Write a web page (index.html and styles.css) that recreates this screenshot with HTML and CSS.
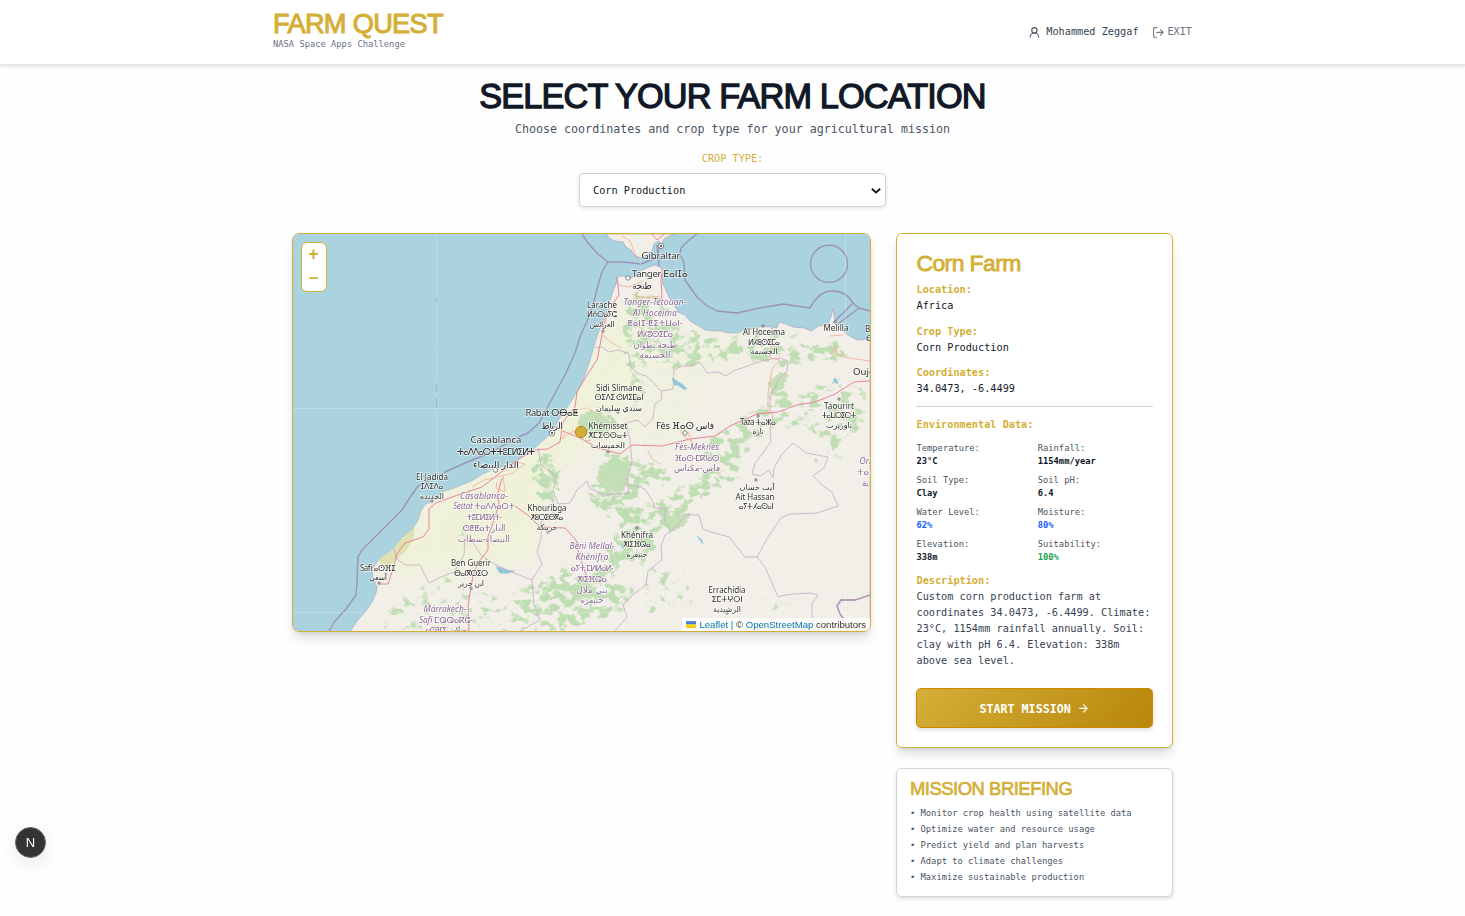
FILE: index.html
```html
<!DOCTYPE html>
<html lang="en">
<head>
<meta charset="utf-8">
<title>Farm Quest</title>
<link rel="stylesheet" href="styles.css">
</head>
<body>
<header class="header">
  <div class="header-inner">
    <div class="brand">
      <div class="display brand-name">FARM QUEST</div>
      <div class="brand-sub">NASA Space Apps Challenge</div>
    </div>
    <div class="account">
      <svg class="icon user-icon" viewBox="0 0 24 24"><circle cx="12" cy="8" r="5"/><path d="M20 21a8 8 0 0 0-16 0"/></svg>
      <span class="user-name">Mohammed Zeggaf</span>
      <a class="exit"><svg class="icon" viewBox="0 0 24 24"><path d="M9 21H5a2 2 0 0 1-2-2V5a2 2 0 0 1 2-2h4M16 17l5-5-5-5M21 12H9"/></svg>EXIT</a>
    </div>
  </div>
</header>

<main class="main">
  <h1 class="display title">SELECT YOUR FARM LOCATION</h1>
  <p class="subtitle">Choose coordinates and crop type for your agricultural mission</p>
  <label class="crop-label" for="crop">CROP TYPE:</label>
  <div class="select-wrap">
    <select id="crop" class="select"><option>Corn Production</option></select>
    <svg class="chevron" viewBox="0 0 10 6"><path d="M0.8 0.8 5 4.5 9.2 0.8"/></svg>
  </div>

  <div class="columns">
    <section class="map">
      <svg class="map-svg" viewBox="293 234 577 397" preserveAspectRatio="none">
        <defs>
          <filter id="forest" filterUnits="userSpaceOnUse" x="293" y="234" width="577" height="397" color-interpolation-filters="sRGB">
            <feGaussianBlur in="SourceGraphic" stdDeviation="5" result="area"/>
            <feTurbulence type="fractalNoise" baseFrequency="0.1 0.13" numOctaves="5" seed="7"/>
            <feColorMatrix values="0 0 0 0 0.75  0 0 0 0 0.87  0 0 0 0 0.70  1 0 0 0 0" result="noise"/>
            <feComposite in="noise" in2="area" operator="in"/>
            <feComponentTransfer><feFuncA type="linear" slope="9" intercept="-3.9"/></feComponentTransfer>
          </filter>
          <filter id="soft" x="-20%" y="-20%" width="140%" height="140%"><feGaussianBlur stdDeviation="12"/></filter>
          <path id="africa" d="M350 632 357 621 365 612 372 602 376 593 377 587 373 578 372 570 376 563 383 556 392 550 405 535 412 530 418 521 421 511 425 505 435 499 443 492 452 489 472 481 483 474 495 469 506 466 518 460 527 454 535 448 544 440 552 433 560 418 568 407 576 394 581 385 585 376 590 361 594 347 599 331 605 317 609 304 613 291 616 284 618 276 624 276 628 279 637 275 642 270 649 267 655 265 660 267 664 271 662 276 663 284 666 290 669 297 674 304 678 312 685 315 690 321 697 325 705 330 713 331 721 331 728 333 738 333 743 330 752 329 763 326 777 328 779 322 786 324 793 327 804 328 811 331 819 326 828 324 831 317 833 308 834 316 836 325 842 330 848 335 857 340 870 339 870 632Z"/>
          <clipPath id="land"><use href="#africa"/></clipPath>
        </defs>

        <rect class="sea" x="293" y="234" width="577" height="397"/>
        <path class="coast" d="M607 234 609 238 615 241 623 242 626 247 631 250 634 255 641 258 647 254 652 251 654 244 659 241 661 246 664 239 669 236 675 234Z"/>
        <use class="coast" href="#africa"/>

        <g clip-path="url(#land)">
          <g class="farmland" filter="url(#soft)">
            <path d="M372 570 430 500 540 440 600 330 640 300 640 350 600 440 560 470 530 560 470 570 400 580Z"/>
            <path d="M600 390 660 350 720 330 760 340 700 390 690 450 590 450Z" opacity=".6"/>
          </g>
          <path class="woods" d="M581 416 590 411 601 413 606 419 613 423 608 430 594 433 584 430 578 424ZM600 467 613 459 626 463 628 480 622 492 607 490 597 480ZM664 521 676 514 690 514 684 525 670 532ZM768 384 780 373 788 374 783 386 775 393ZM570 590 584 584 596 588 588 597 574 600Z"/>
          <g filter="url(#forest)">
            <path d="M530 450h28l8 40-18 25-20-30zM578 414l36-10 10 24-20 12-24-6zM600 445l60 15 20 20-40 15-40 5zM590 480l40-15 10 40-20 20-40-20z"/>
            <path d="M630 510l60-30 50-20 10 14-60 34-40 50-40 20-30 30-50 10-10-30 70-20zM570 580h70l-10 30-50 20zM540 595l35-10 10 46h-40z"/>
            <path d="M645 285l20 10 20 30 60 14 50 10 40-15 20 20-70 15-60-6-50 10-45-20-10-40zM700 440l60-40 20-30 15 10-20 50-50 50-25 5z" opacity=".93"/>
            <path d="M780 400l60-30 30 20v50l-40 10-50-20zM620 290h20l10 110-20 20-10-60z" opacity=".85"/>
            <path d="M380 600l70-30 60 20 60-40 30 40-40 50H380zM640 560l50 10 10 40-60 10zM800 460l40-20 20 20-40 12zM740 320l60 10 60 30-50 10-80-10z" opacity=".76"/>
            <path d="M440 510l40 5 20 30-50 10zM760 590l60 10-10 20-70 0z" opacity=".72"/>
          </g>
          <path class="scrub" d="M377 560 391 549 405 536 415 524 413 540 405 552 393 562 386 568Z"/>
        </g>

        <g class="lake">
          <path d="M672 378l5 3 5 3 5 5-4 0-5-4-4 0zM496 567l5 1 5 2 8 1-5 2-9 0zM834 378l3 2 1 4-4-2zM697 536l5 4 1 4-3-4zM621 545l3 1-1 3z"/>
        </g>

        <g class="province">
          <path d="M595 348 602 347 609 352 619 350 629 354 630 366 637 373 646 376 655 384 661 391 673 389 674 370 682 366 692 366 700 362 707 373 718 372 726 376 735 370 745 367 758 362 771 359 780 358 788 361 787 371 779 378 775 388 770 394 770 410 773 416 770 428 771 441 763 453 755 463 752 474 761 476 769 470 773 478 774 468 782 454 793 443 806 453 828 457 824 468 813 476 822 485 832 492 838 506 817 513 790 514 781 518 768 537 757 557 745 557 729 537 711 532 703 529 699 515 686 515 673 530 665 535 661 546 662 560 648 571 646 585 634 594 623 605 627 617 615 631"/>
          <path d="M661 391 662 399 655 404 653 418 645 427 638 420 626 423 630 440 632 462 627 478 629 493 605 495 590 489 587 481 577 490 570 503 558 504 553 491 556 476 549 471 541 465 538 448"/>
          <path d="M553 499 553 515 541 521 541 538 537 552 542 564 532 580 514 573 496 565 481 555 470 538M465 538 464 555 454 572 441 577 429 583 420 565 405 565 396 558 394 548"/>
          <path d="M532 580 534 604 540 620 520 631M757 557 765 567 772 583 778 597 785 595 793 594 810 593 818 595 812 603 812 615 816 631M629 484 645 489 652 500 655 508 666 508 664 520 671 530"/>
        </g>
        <path class="border" d="M870 595 855 600 841 600 837 606 840 614 843 618 848 631"/>

        <g class="road-red">
          <path d="M617 277 619 295 609 309 604 325 600 345 597 360 587 375 577 392 575 407 563 422 560 442 548 449 535 450 520 458 500 473 482 487 455 496 436 503 429 509 429 529 423 537 405 543 397 554 392 572 388 584 379 584"/>
          <path d="M563 431 580 438 598 448 620 454 632 445 662 446 690 439 715 436 730 426 757 414 778 412 797 405 815 402 835 394 854 382 870 381M502 478 498 493 499 505 488 537 488 550 478 563 473 575 468 606 469 631M515 506 529 516 540 527 565 528 576 540 580 558 588 580M662 269 661 281 662 295 661 301M652 234 657 240 662 236 664 234"/>
        </g>
        <g class="road-orange">
          <path d="M472 487 484 480 497 477 513 473 525 464 518 462 506 468M497 482 496 488 505 492 503 475M618 285 629 287 642 281 636 296 650 298 660 296M602 335 612 343 621 348M768 414 768 394 772 369 780 360 770 358 772 342M836 346 837 355 849 358 870 361M836 346 832 354M830 336 843 335M648 451 652 459 660 464M565 433 562 439 573 431 585 441 591 440M622 236 630 241 638 261M680 430 684 436 692 442 688 432M580 409 588 408 594 412"/>
        </g>

        <g class="maritime">
          <path d="M582 234 588 243 597 253 608 262 624 262 641 264 658 257 657 245M608 262 602 272 598 285 593 305 587 321 580 337 575 353 565 375 553 397 545 412 539 423 528 433 514 439 492 452 465 463 445 472 418 486 411 496 402 510 384 528 362 550 358 557 357 582 356 595 346 609 335 621 329 631M658 246 659 267"/>
          <path d="M697 234 688 241 681 248 680 254 684 263 685 280 697 297 706 305 717 311 737 313 760 308 783 304 810 308Q819 291 832 291 846 291 853 303L859 308 870 311M853 303 835 321M859 308 838 324"/>
          <circle cx="829" cy="263.8" r="18.5"/>
        </g>

        <g class="seam"><path d="M436.5 234V631M293 408.5H870M293 612.5H870M640.5 234V631M845.5 234V631"/></g>
        <path class="seam-dark" d="M436.5 297v5M436.5 348v1M436.5 383v8M436.5 398v10"/>

        <g class="town">
          <circle cx="661" cy="246" r="2.6"/><circle cx="628" cy="278" r="2.2"/><circle cx="552" cy="433" r="2.8"/><circle cx="495.5" cy="470" r="2.2"/><circle cx="685" cy="433" r="2.2"/>
          <path d="M602 330h2v2h-2zM762 325h2v2h-2zM834 321h2v2h-2zM617 411h2v2h-2zM838 398h2v2h-2zM757 415h2v2h-2zM607 451h2v2h-2zM755 479h2v2h-2zM636 527h2v2h-2zM431 500h2v2h-2zM547 531h2v2h-2zM378 582h2v2h-2zM470 587h2v2h-2zM726 612h2v2h-2z"/>
        </g>
        <g class="capital"><circle cx="661" cy="246" r="1"/><circle cx="552" cy="433" r="1"/></g>

        <g class="label city">
          <text x="661" y="258.500" textLength="39">Gibraltar</text>
          <text x="660" y="276.500" textLength="56">Tanger ⴹⴰⵏⵊⴰ</text><text x="642" y="289" textLength="20">طنجة</text>
          <text x="552" y="415.500" textLength="53">Rabat ⵔⴱⴰⵟ</text><text x="552" y="428.500" textLength="22">الرباط</text>
          <text x="496" y="442.500" textLength="51">Casablanca</text><text x="496" y="454.500" textLength="78">ⵜⴰⴷⴷⴰⵔⵜ ⵜⵓⵎⵍⵉⵍⵜ</text><text x="496" y="467.500" textLength="46">الدار البيضاء</text>
          <text x="685" y="429" textLength="58">Fès ⴼⴰⵙ فاس</text>
          <text x="853" y="374.500" class="edge">Oujda</text>
        </g>
        <g class="label">
          <text x="602" y="308" textLength="30">Larache</text><text x="602" y="317" textLength="30">ⵍⵄⵔⴰⵢⵛ</text><text x="602" y="327" textLength="25">العرائش</text>
          <text x="764" y="334.500" textLength="42">Al Hoceima</text><text x="764" y="344.500" textLength="32">ⵍⵃⵓⵙⵉⵎⴰ</text><text x="764" y="354" textLength="27">الحسيمة</text>
          <text x="836" y="330.500" textLength="25">Melilla</text>
          <text x="619" y="390.500" textLength="46">Sidi Slimane</text><text x="619" y="400" textLength="49">ⵙⵉⴷⵉ ⵙⵍⵉⵎⴰⵏ</text><text x="619" y="410.500" textLength="46">سيدي سليمان</text>
          <text x="608" y="428.500" textLength="39">Khémisset</text><text x="608" y="437.500" textLength="40">ⵅⵎⵉⵙⵙⴰⵜ</text><text x="608" y="447.500" textLength="34">الخميسات</text>
          <text x="758" y="424.500" textLength="36">Taza ⵜⴰⵣⴰ</text><text x="758" y="434" textLength="11">تازة</text>
          <text x="839" y="408.500" textLength="30">Taourirt</text><text x="839" y="418" textLength="35">ⵜⴰⵡⵔⵉⵔⵜ</text><text x="839" y="428" textLength="26">تاوريرت</text>
          <text x="757" y="490" textLength="35">آيت حسان</text><text x="755" y="499.500" textLength="39">Ait Hassan</text><text x="756" y="509" textLength="35">ⴰⵢⵜ ⵃⴰⵙⴰⵏ</text>
          <text x="432" y="479.500" textLength="32">El Jadida</text><text x="432" y="489" textLength="23">ⵊⴷⵉⴷⴰ</text><text x="432" y="498.500" textLength="24">الجديدة</text>
          <text x="547" y="510.500" textLength="39">Khouribga</text><text x="547" y="520" textLength="33">ⵅⵓⵔⵉⴱⴳⴰ</text><text x="547" y="530" textLength="21">خريبكة</text>
          <text x="637" y="537.500" textLength="32">Khénifra</text><text x="637" y="547" textLength="28">ⵅⵏⵉⴼⵕⴰ</text><text x="637" y="557" textLength="21">خنيفرة</text>
          <text x="471" y="566" textLength="40">Ben Guerir</text><text x="471" y="575.500" textLength="34">ⴱⴰⵏⴳⵔⵉⵔ</text><text x="471" y="585.500" textLength="26">ابن جرير</text>
          <text x="378" y="570.500" textLength="36">Safi ⴰⵙⴼⵉ</text><text x="378" y="580" textLength="18">آسفي</text>
          <text x="727" y="592.500" textLength="37">Errachidia</text><text x="727" y="602" textLength="31">ⵉⵎⵜⵖⵔⵏ</text><text x="727" y="612" textLength="28">الرشيدية</text>
          <text x="865" y="331.500" class="edge">Be</text><text x="866" y="341" class="edge">ⴱ</text>
        </g>
        <g class="label region">
          <text x="655" y="304.500" textLength="63">Tanger-Tétouan-</text><text x="655" y="315.500" textLength="44">Al Hoceima</text><text class="plain" x="655" y="326" textLength="55">ⵟⴰⵏⵊ-ⵟⵉⵜⵡⴰⵏ-</text><text class="plain" x="655" y="337" textLength="36">ⵍⵃⵓⵙⵉⵎⴰ</text><text class="plain" x="655" y="348" textLength="43">طنجة تطوان</text><text class="plain" x="655" y="358" textLength="31">الحسيمة</text>
          <text x="697" y="449.500" textLength="44">Fès-Meknès</text><text class="plain" x="697" y="460.500" textLength="45">ⴼⴰⵙ-ⵎⴽⵏⴰⵙ</text><text class="plain" x="697" y="471" textLength="46">فاس-مكناس</text>
          <text x="484" y="499" textLength="48">Casablanca-</text><text x="484" y="509" textLength="62">Settat <tspan class="plain">ⵜⴰⴷⴷⴰⵔⵜ</tspan></text><text class="plain" x="484" y="520" textLength="36">ⵜⵓⵎⵍⵉⵍⵜ-</text><text class="plain" x="484" y="531" textLength="43">ⵙⵟⵟⴰⵜ الدار</text><text class="plain" x="484" y="542" textLength="52">البيضاء-سطات</text>
          <text x="592" y="549" textLength="45">Béni Mellal-</text><text x="592" y="560" textLength="33">Khénifra</text><text class="plain" x="592" y="571" textLength="43">ⴰⵢⵜ ⵎⵍⵍⴰⵍ-</text><text class="plain" x="592" y="582" textLength="30">ⵅⵏⵉⴼⵕⴰ</text><text class="plain" x="592" y="593" textLength="31">بني ملال</text><text class="plain" x="592" y="603" textLength="23">خنيفرة</text>
          <text x="445" y="612" textLength="43">Marrakech-</text><text x="446" y="623" textLength="54">Safi <tspan class="plain">ⵎⵕⵕⴰⴽⵛ-</tspan></text><text class="plain" x="446" y="633" textLength="41">ⴰⵙⴼⵉ مراكش</text>
          <text class="edge" x="859.500" y="464">Ori</text><text class="plain edge" x="857" y="475">ⵜⴰⵏⴳ</text><text class="plain edge" x="862" y="486">ية</text>
        </g>
        <circle class="marker" cx="581" cy="432" r="5.6"/>
      </svg>
      <div class="zoom"><button>+</button><button>−</button></div>
      <div class="attribution"><svg class="flag" viewBox="0 0 12 8"><path fill="#4c7be1" d="M0 0h12v4H0z"/><path fill="#ffd500" d="M0 4h12v3H0z"/><path fill="#e0bc00" d="M0 7h12v1H0z"/></svg><span><a>Leaflet</a> <i>|</i> © <a>OpenStreetMap</a> contributors</span></div>
    </section>

    <aside class="side">
      <section class="card farm">
        <h2 class="display farm-title">Corn Farm</h2>
        <div class="field"><b>Location:</b><span>Africa</span></div>
        <div class="field"><b>Crop Type:</b><span>Corn Production</span></div>
        <div class="field coords"><b>Coordinates:</b><span>34.0473, -6.4499</span></div>
        <div class="env">
          <b class="gold">Environmental Data:</b>
          <div class="stats">
            <div>Temperature:<b>23°C</b></div><div>Rainfall:<b>1154mm/year</b></div>
            <div>Soil Type:<b>Clay</b></div><div>Soil pH:<b>6.4</b></div>
            <div>Water Level:<b class="blue">62%</b></div><div>Moisture:<b class="blue">80%</b></div>
            <div>Elevation:<b>338m</b></div><div>Suitability:<b class="green">100%</b></div>
          </div>
        </div>
        <b class="gold">Description:</b>
        <p class="description">Custom corn production farm at coordinates 34.0473, -6.4499. Climate: 23°C, 1154mm rainfall annually. Soil: clay with pH 6.4. Elevation: 338m above sea level.</p>
        <button class="start"><span class="start-text">START MISSION</span><svg class="arrow" viewBox="0 0 24 24"><path d="M5 12h14M12 5l7 7-7 7"/></svg></button>
      </section>
      <section class="card briefing">
        <h3 class="display briefing-title">MISSION BRIEFING</h3>
        <ul class="list">
          <li>• Monitor crop health using satellite data</li>
          <li>• Optimize water and resource usage</li>
          <li>• Predict yield and plan harvests</li>
          <li>• Adapt to climate challenges</li>
          <li>• Maximize sustainable production</li>
        </ul>
      </section>
    </aside>
  </div>
</main>
<div class="dev-badge">N</div>
</body>
</html>
```

FILE: styles.css
```css
* { box-sizing: border-box; }
body {
  margin: 0;
  height: 916px;
  overflow: hidden;
  background: #fefefe;
  color: #111827;
  font: 10.23px/16px "DejaVu Sans Mono", monospace;
}
h1, h2, h3, p, ul { margin: 0; padding: 0; font-weight: 400; }
button { font: inherit; }
.display {
  font-family: "Liberation Sans", Arial, sans-serif;
  letter-spacing: -0.025em;
  -webkit-text-stroke: 0.038em currentColor;
  white-space: nowrap;
}
.gold, .field b { color: #d4af37; display: block; }

.header {
  height: 65px;
  background: #fff;
  border-bottom: 1px solid #e5e7eb;
  box-shadow: 0 1px 3px rgba(0, 0, 0, .16);
}
.header-inner {
  width: 921px;
  height: 64px;
  margin: 0 auto;
  display: flex;
  justify-content: space-between;
  align-items: center;
}
.brand { padding-bottom: 4px; padding-left: 1px; }
.brand-name { font-size: 27.2px; line-height: 29px; color: #d4af37; }
.brand-sub { font-size: 8.77px; line-height: 13px; color: #6b7280; }
.account { display: flex; align-items: center; color: #374151; padding-right: 1px; }
.icon { width: 12.8px; height: 12.8px; fill: none; stroke: #6b7280; stroke-width: 2; stroke-linecap: round; stroke-linejoin: round; }
.user-icon { stroke: #4b5563; margin-right: 6px; }
.exit { display: flex; align-items: center; gap: 3px; margin-left: 13px; color: #6b7280; }

.main { width: 881px; margin: 0 auto; padding-top: 11px; }
.title { font-size: 34.3px; line-height: 40px; text-align: center; color: #111827; }
.subtitle { margin-top: 3px; font-size: 11.66px; line-height: 20px; text-align: center; color: #4b5563; }
.crop-label { display: block; margin-top: 12px; line-height: 16px; text-align: center; color: #d4af37; }
.select-wrap { position: relative; width: 307px; height: 34px; margin: 6px auto 0; }
.select {
  appearance: none;
  width: 100%;
  height: 100%;
  padding: 1px 13px 0;
  font: inherit;
  color: #111827;
  background: #fff;
  border: 1px solid #d1d5db;
  border-radius: 5px;
  box-shadow: 0 1px 4px rgba(0, 0, 0, .12);
}
.chevron { position: absolute; right: 5.5px; top: 14.5px; width: 10px; height: 6px; fill: none; stroke: #111827; stroke-width: 1.8; }

.columns { display: grid; grid-template-columns: 579px 277px; gap: 25px; margin-top: 26px; align-items: start; }
.map {
  position: relative;
  height: 399px;
  border: 1px solid #d4af37;
  border-radius: 7px;
  overflow: hidden;
  box-shadow: 0 8px 12px -2px rgba(0, 0, 0, .12), 0 3px 5px -2px rgba(0, 0, 0, .1);
}
.map-svg { display: block; width: 100%; height: 100%; }
.sea { fill: #aad3df; }
.coast { fill: #f2efe9; stroke: #a59bb6; stroke-width: .6; }
.farmland { fill: #eff2d8; }
.woods { fill: #c6dfb8; stroke: #c6dfb8; stroke-width: 2; stroke-dasharray: 3 2; }
.scrub { fill: #dfe2b0; }
.lake { fill: #8ec7dc; stroke: #8ec7dc; stroke-width: .7; }
.province { fill: none; stroke: #c6b2c9; stroke-width: .9; stroke-linejoin: round; }
.border { fill: none; stroke: #b39abb; stroke-width: 1.8; stroke-linejoin: round; }
.road-red { fill: none; stroke: #e9829c; stroke-width: 1; stroke-linejoin: round; }
.road-orange { fill: none; stroke: #f7a894; stroke-width: .8; }
.maritime { fill: none; stroke: #9b94b5; stroke-width: 1.4; stroke-linejoin: round; }
.seam { fill: none; stroke: #fff; stroke-opacity: .28; stroke-width: .8; }
.seam-dark { stroke: #8fb4b8; stroke-width: .8; }
.town { fill: #fff; stroke: #555; stroke-width: .7; }
.capital { fill: #333; }
.label {
  font-family: "Noto Sans", "DejaVu Sans", sans-serif;
  font-size: 8px;
  fill: #2c2c2c;
  stroke: rgba(255, 255, 255, .7);
  stroke-width: 1.6px;
  paint-order: stroke;
  stroke-linejoin: round;
  text-anchor: middle;
}
.city { font-size: 9.6px; }
.region { font-size: 8.6px; font-style: italic; fill: #8b6593; }
.plain { font-style: normal; }
.edge { text-anchor: start; }
.marker { fill: #d4af37; stroke: #b8860b; stroke-width: 1; }
.zoom {
  position: absolute;
  left: 8px;
  top: 8px;
  width: 26px;
  height: 50px;
  display: grid;
  background: #fff;
  border: 1px solid #d4af37;
  border-radius: 6px;
}
.zoom button { padding: 0 1px 0 0; border: 0; background: none; color: #d4af37; font: bold 17.6px/24px "Liberation Mono", monospace; }
.attribution {
  position: absolute;
  right: 0;
  bottom: 0;
  display: flex;
  align-items: center;
  padding: 0 4px;
  gap: 3px;
  height: 13px;
  background: rgba(255, 255, 255, .8);
  color: #333;
  font: 9.6px/13px "Liberation Sans", Arial, sans-serif;
  letter-spacing: -.01px;
  white-space: nowrap;
}
.attribution a, .attribution i { color: #0078a8; font-style: normal; }
.flag { width: 10px; height: 7px; }

.side { display: grid; gap: 20px; }
.card { background: #fff; border: 1px solid #d1d5db; border-radius: 6px; }
.farm {
  height: 515px;
  padding: 16px 19px 19px;
  border-color: #d4af37;
  box-shadow: 0 8px 12px -2px rgba(0, 0, 0, .12), 0 3px 5px -2px rgba(0, 0, 0, .1);
}
.farm-title { font-size: 22.9px; line-height: 26px; margin-bottom: 6px; color: #d4af37; }
.farm-title, .field, .gold, .stats, .description { padding-left: .5px; }
.field { margin-bottom: 9.5px; }
.field span { display: block; }
.coords { margin-bottom: 0; }
.env { margin-top: 9px; padding-top: 10px; border-top: 1px solid #d1d5db; }
.stats {
  display: grid;
  grid-template-columns: 1fr 1fr;
  gap: 6px;
  margin: 9px 0;
  font-size: 8.77px;
  line-height: 13px;
  color: #4b5563;
}
.stats b { display: block; color: #111827; }
.stats .blue { color: #155dfc; }
.stats .green { color: #16a34a; }
.description { color: #374151; white-space: normal; }
.start {
  width: 100%;
  height: 40px;
  margin-top: 19px;
  display: flex;
  justify-content: center;
  align-items: center;
  gap: 6px;
  padding: 0;
  color: #fff;
  font-size: 11.66px;
  font-weight: 700;
  background: linear-gradient(135deg, #d4af37, #b8860b);
  border: 1px solid #d08700;
  border-radius: 5px;
  box-shadow: 0 2px 4px rgba(0, 0, 0, .14);
}
.start-text { padding-top: 2px; }
.arrow { width: 12.8px; height: 12.8px; fill: none; stroke: #fff; stroke-width: 2; stroke-linecap: round; stroke-linejoin: round; }
.briefing { height: 129px; padding: 9px 13px; box-shadow: 0 2px 4px rgba(0, 0, 0, .12); }
.briefing-title { font-size: 18.4px; line-height: 22px; margin-bottom: 5px; color: #d4af37; }
.list { list-style: none; font-size: 8.77px; color: #4b5563; }

.dev-badge {
  position: fixed;
  left: 15px;
  top: 827px;
  width: 31px;
  height: 31px;
  border-radius: 50%;
  border: 1px solid #666;
  background: #333;
  color: #fff;
  font: 13px/30px "Liberation Sans", Arial, sans-serif;
  text-align: center;
  box-shadow: 0 6px 20px rgba(0, 0, 0, .09);
}
```
